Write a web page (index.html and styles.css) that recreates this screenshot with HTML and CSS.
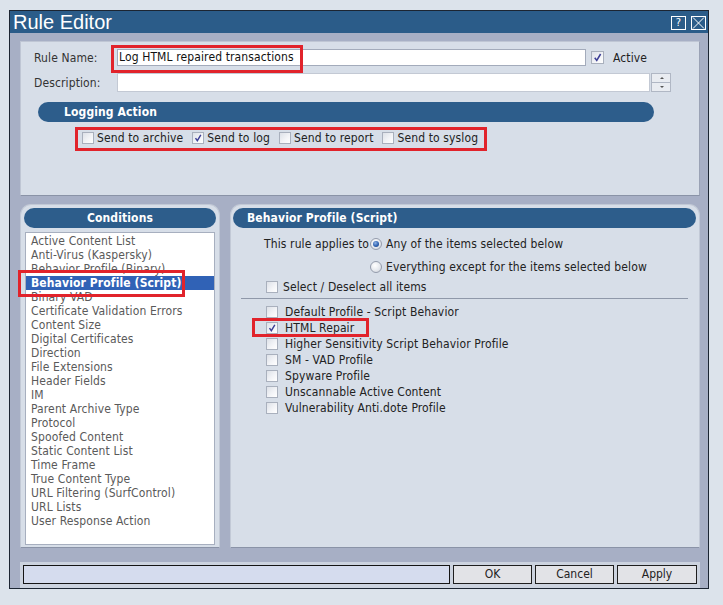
FILE: index.html
```html
<!DOCTYPE html>
<html>
<head>
<meta charset="utf-8">
<title>Rule Editor</title>
<link rel="stylesheet" href="styles.css">
</head>
<body>
<div class="page">
  <div class="window">
    <div class="titlebar">
      <span class="title">Rule Editor</span>
      <span class="tb-btns">
        <span class="tb-btn help">?</span>
        <span class="tb-btn close"><svg width="13" height="12" viewBox="0 0 13 12"><path d="M1 0.5 L12 11.5 M12 0.5 L1 11.5" stroke="#ffffff" stroke-width="1" fill="none"/></svg></span>
      </span>
    </div>
    <div class="body">
      <div class="top-panel">
        <div class="form-row r1">
          <span class="lbl">Rule Name:</span>
          <div class="input name">Log HTML repaired transactions</div>
          <span class="cb big checked"><svg viewBox="0 0 12 12"><path d="M3 6.2 L5.2 9.2 L9.4 2.2" stroke="#3d3f96" stroke-width="1.7" fill="none"/></svg></span>
          <span class="active-lbl">Active</span>
        </div>
        <div class="form-row r2">
          <span class="lbl">Description:</span>
          <div class="input desc"></div>
          <div class="spinner"><span class="spin up"></span><span class="spin down"></span></div>
        </div>
        <div class="pill logging">Logging Action</div>
        <div class="log-opts">
          <span class="opt"><span class="cb"></span>Send to archive</span>
          <span class="opt"><span class="cb checked"><svg viewBox="0 0 12 12"><path d="M3 6.2 L5.2 9.2 L9.4 2.2" stroke="#3d3f96" stroke-width="1.7" fill="none"/></svg></span>Send to log</span>
          <span class="opt"><span class="cb"></span>Send to report</span>
          <span class="opt"><span class="cb"></span>Send to syslog</span>
        </div>
      </div>

      <div class="lower">
        <div class="panel cond">
          <div class="pill center">Conditions</div>
          <ul class="list">
            <li>Active Content List</li>
            <li>Anti-Virus (Kaspersky)</li>
            <li>Behavior Profile (Binary)</li>
            <li class="sel">Behavior Profile (Script)</li>
            <li>Binary VAD</li>
            <li>Certificate Validation Errors</li>
            <li>Content Size</li>
            <li>Digital Certificates</li>
            <li>Direction</li>
            <li>File Extensions</li>
            <li>Header Fields</li>
            <li>IM</li>
            <li>Parent Archive Type</li>
            <li>Protocol</li>
            <li>Spoofed Content</li>
            <li>Static Content List</li>
            <li>Time Frame</li>
            <li>True Content Type</li>
            <li>URL Filtering (SurfControl)</li>
            <li>URL Lists</li>
            <li>User Response Action</li>
          </ul>
        </div>
        <div class="panel detail">
          <div class="pill">Behavior Profile (Script)</div>
          <div class="applies">
            <span>This rule applies to</span>
            <span class="radio on"></span>
            <span>Any of the items selected below</span>
            <span></span>
            <span class="radio"></span>
            <span>Everything except for the items selected below</span>
          </div>
          <div class="select-all"><span class="cb"></span><span>Select / Deselect all items</span></div>
          <div class="sep"></div>
          <ul class="items">
            <li><span class="cb"></span>Default Profile - Script Behavior</li>
            <li><span class="cb checked"><svg viewBox="0 0 12 12"><path d="M3 6.2 L5.2 9.2 L9.4 2.2" stroke="#3d3f96" stroke-width="1.7" fill="none"/></svg></span>HTML Repair</li>
            <li><span class="cb"></span>Higher Sensitivity Script Behavior Profile</li>
            <li><span class="cb"></span>SM - VAD Profile</li>
            <li><span class="cb"></span>Spyware Profile</li>
            <li><span class="cb"></span>Unscannable Active Content</li>
            <li><span class="cb"></span>Vulnerability Anti.dote Profile</li>
          </ul>
        </div>
      </div>

      <div class="footer">
        <div class="status"></div>
        <button class="btn ok">OK</button>
        <button class="btn">Cancel</button>
        <button class="btn apply">Apply</button>
      </div>
    </div>
  </div>

  <div class="mark mark-name"></div>
  <div class="mark mark-log"></div>
  <div class="mark mark-cond"></div>
  <div class="mark mark-html"></div>
</div>
</body>
</html>
```

FILE: styles.css
```css
html, body {
  margin: 0;
  padding: 0;
}
body {
  background: #dce3eb;
  font-family: "DejaVu Sans Condensed", "DejaVu Sans", sans-serif;
  font-stretch: condensed;
  font-size: 12px;
  letter-spacing: 0.12px;
  color: #222;
}
.page {
  position: relative;
  width: 723px;
  height: 605px;
  overflow: hidden;
  padding: 10px 0 0 9px;
  box-sizing: border-box;
}
.window {
  width: 700px;
  height: 579px;
  box-sizing: border-box;
  border: 1px solid #1c2532;
  background: #a7afc5;
  display: flex;
  flex-direction: column;
}
.titlebar {
  height: 22px;
  flex: 0 0 22px;
  background: #2b5c89;
  display: flex;
  align-items: center;
  justify-content: space-between;
  padding: 0 2px 0 3px;
}
.title {
  font-family: "Liberation Sans", Arial, sans-serif;
  font-stretch: normal;
  letter-spacing: 0;
  font-size: 20px;
  line-height: 22px;
  color: #ffffff;
}
.tb-btns {
  display: flex;
  gap: 5px;
  padding-top: 1px;
}
.tb-btn {
  width: 15px;
  height: 14px;
  box-sizing: border-box;
  border: 1px solid #ffffff;
  color: #ffffff;
  font-size: 11px;
  line-height: 12px;
  text-align: center;
  display: flex;
  align-items: center;
  justify-content: center;
}
.tb-btn svg {
  display: block;
}
.body {
  flex: 1;
  padding: 8px 8px 0 10px;
  display: flex;
  flex-direction: column;
}

/* Top panel */
.top-panel {
  height: 155px;
  box-sizing: border-box;
  background: #d7dee8;
  border: 1px solid #bfc6d4;
  border-bottom-color: #8a93a7;
  border-right-color: #9aa2b5;
  padding: 7px 0 0 13px;
}
.form-row {
  display: flex;
  align-items: center;
}
.r1 { height: 17px; }
.r2 { height: 19px; margin-top: 7px; }
.lbl {
  width: 83px;
  color: #333;
}
.input {
  box-sizing: border-box;
  background: #ffffff;
  border: 1px solid #a3abbb;
  height: 100%;
  color: #111;
}
.input.name {
  width: 469px;
  padding-left: 1px;
  line-height: 15px;
}
.input.desc {
  width: 533px;
  border-color: #c3c9d4;
}
.active-lbl {
  margin-left: 9px;
  color: #222;
}
.spinner {
  width: 20px;
  height: 19px;
  margin-left: 1px;
  display: flex;
  flex-direction: column;
}
.spin {
  flex: 1;
  box-sizing: border-box;
  border: 1px solid #b0b7c4;
  background: #e9ecf1;
  position: relative;
}
.spin.down { border-top: none; }
.spin::after {
  content: "";
  position: absolute;
  left: 8px;
  top: 3px;
  border-left: 2px solid transparent;
  border-right: 2px solid transparent;
}
.spin.up::after { border-bottom: 2px solid #555; }
.spin.down::after { border-top: 2px solid #555; top: 3px; }

.pill {
  background: #2d5d8b;
  color: #ffffff;
  font-weight: bold;
  height: 20px;
  line-height: 20px;
  border-radius: 10px;
  box-sizing: border-box;
}
.pill.logging {
  margin: 10px 0 0 4px;
  width: 616px;
  padding-left: 26px;
}
.pill.center {
  text-align: center;
}
.log-opts {
  display: flex;
  align-items: center;
  height: 14px;
  margin: 9px 0 0 48px;
  color: #222;
}
.opt {
  display: flex;
  align-items: center;
  gap: 3px;
  margin-right: 9px;
}

/* Checkboxes and radios */
.cb {
  display: inline-block;
  flex: 0 0 12px;
  width: 12px;
  height: 12px;
  box-sizing: border-box;
  border: 1px solid #a9b0bd;
  background: linear-gradient(135deg, #dde1e8 0%, #f4f5f8 60%, #ffffff 100%);
  position: relative;
}
.cb.big {
  flex: 0 0 13px;
  width: 13px;
  height: 13px;
  margin-left: 5px;
}
.cb svg {
  position: absolute;
  left: 0;
  top: 0;
  width: 100%;
  height: 100%;
  display: block;
}
.radio {
  display: inline-block;
  width: 12px;
  height: 12px;
  box-sizing: border-box;
  border-radius: 50%;
  border: 1px solid #949cac;
  background: radial-gradient(circle at 40% 35%, #ffffff 0%, #e6e9ee 55%, #c9ced8 100%);
  position: relative;
}
.radio.on::after {
  content: "";
  position: absolute;
  left: 2px;
  top: 2px;
  width: 6px;
  height: 6px;
  border-radius: 50%;
  background: radial-gradient(circle at 40% 35%, #8fb3e6 0%, #2f62b0 55%, #1d3f7a 100%);
}

/* Lower panels */
.lower {
  display: flex;
  gap: 10px;
  margin-top: 8px;
  height: 344px;
}
.panel {
  box-sizing: border-box;
  background: #d7dee8;
  border: 1px solid #c2c9d6;
  border-bottom-color: #8a93a7;
  border-radius: 11px 11px 0 0;
  padding: 3px 3px 2px 3px;
  display: flex;
  flex-direction: column;
}
.panel.cond {
  width: 200px;
}
.panel.detail {
  flex: 1;
  padding-left: 2px;
}
.panel.detail .pill {
  padding-left: 14px;
}
.list {
  list-style: none;
  margin: 4px 1px 0 1px;
  padding: 1px 0 0 0;
  flex: 1;
  background: #ffffff;
  border: 1px solid #a7afbf;
  color: #5a5a5a;
}
.list li {
  line-height: 14px;
  height: 14px;
  padding-left: 5px;
  white-space: nowrap;
}
.list li.sel {
  background: #3062b6;
  color: #ffffff;
  font-weight: bold;
}
.applies {
  display: grid;
  grid-template-columns: 106px 16px auto;
  row-gap: 9px;
  align-items: center;
  margin: 9px 0 0 31px;
  line-height: 14px;
  color: #222;
}
.select-all {
  display: flex;
  align-items: center;
  gap: 5px;
  height: 14px;
  margin: 6px 0 0 33px;
  color: #222;
}
.sep {
  margin: 4px 8px 0 8px;
  border-top: 1px solid #8f98a9;
  height: 0;
}
.items {
  list-style: none;
  margin: 5px 0 0 0;
  padding: 0 0 0 33px;
  color: #222;
}
.items li {
  height: 16px;
  display: flex;
  align-items: center;
  gap: 7px;
  white-space: nowrap;
}

/* Footer */
.footer {
  margin-top: 14px;
  height: 26px;
  box-sizing: border-box;
  background: #ccd3df;
  padding: 3px;
  display: flex;
  gap: 3px;
  width: 680px;
}
.status {
  flex: 0 0 427px;
  height: 19px;
  box-sizing: border-box;
  border: 1px solid #151515;
  background: #d5dcee;
}
.btn {
  flex: 0 0 79px;
  height: 19px;
  box-sizing: border-box;
  border: 1px solid #1e1e1e;
  background: #e2e3e7;
  font-family: "DejaVu Sans Condensed", "DejaVu Sans", sans-serif;
  font-stretch: condensed;
  font-size: 12px;
  color: #222;
  padding: 0;
  margin: 0;
  line-height: 17px;
}
.btn.apply {
  flex-basis: 80px;
}

/* Red annotation boxes */
.mark {
  position: absolute;
  box-sizing: border-box;
  border: 3px solid #e1232b;
}
.mark-name { left: 111px; top: 45px; width: 192px; height: 28px; }
.mark-log  { left: 75px;  top: 127px; width: 412px; height: 24px; }
.mark-cond { left: 18px;  top: 270px; width: 167px; height: 27px; }
.mark-html { left: 252px; top: 318px; width: 117px; height: 19px; }
```
